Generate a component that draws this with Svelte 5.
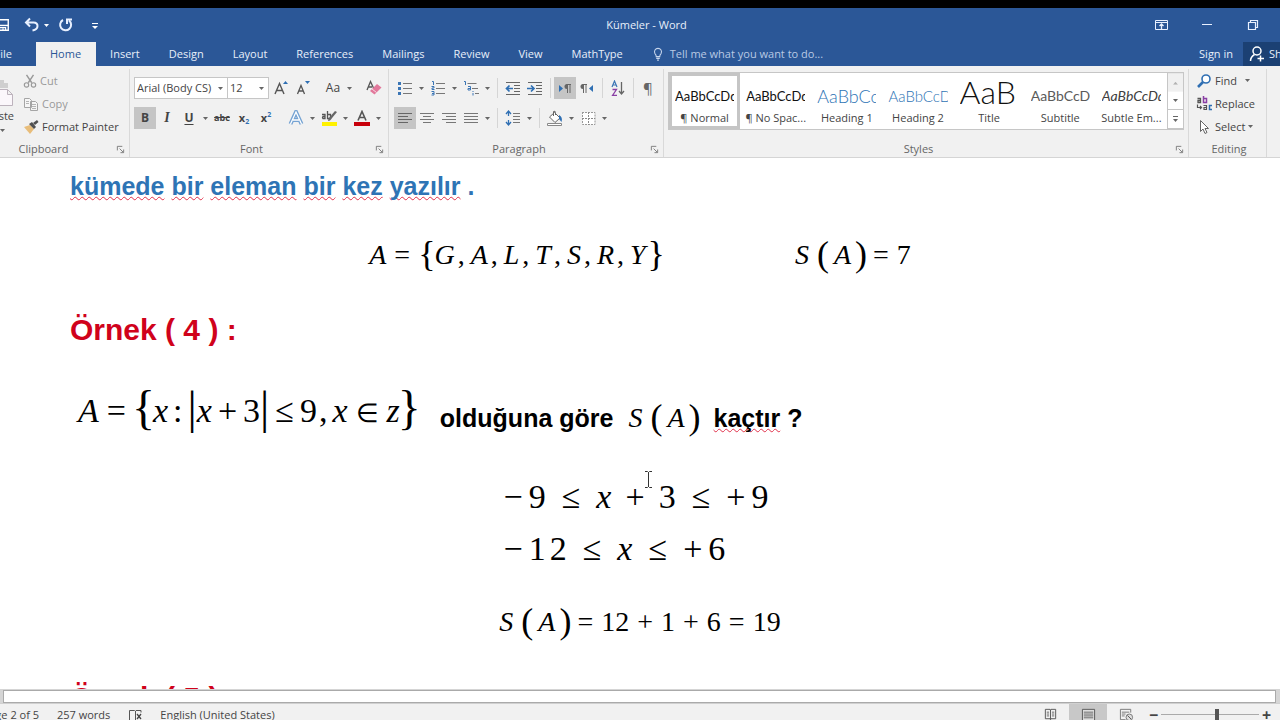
<script lang="ts">
  type Token = [kind: string, text: string];

  const tabs = ["Home", "Insert", "Design", "Layout", "References", "Mailings", "Review", "View", "MathType"];

  const styles = [
    { name: "¶ Normal", sample: "AaBbCcDd", look: "body" },
    { name: "¶ No Spac...", sample: "AaBbCcDd", look: "body" },
    { name: "Heading 1", sample: "AaBbCcDd", look: "heading1" },
    { name: "Heading 2", sample: "AaBbCcDd", look: "heading2" },
    { name: "Title", sample: "AaB", look: "display" },
    { name: "Subtitle", sample: "AaBbCcDd", look: "subtitle" },
    { name: "Subtle Em...", sample: "AaBbCcDd", look: "subtle" },
  ];

  // "|" is a separator, "v" is a small drop-down arrow
  const fontTop = ["grow", "shrink", "|", "case", "v", "|", "eraser"];
  const fontBottom = ["bold", "italic", "underline", "v", "strike", "sub", "sup", "|", "effects", "v", "highlight", "v", "color", "v"];
  const paraTop = ["bullets", "v", "numbers", "v", "multilevel", "v", "|", "outdent", "indent", "|", "ltr", "rtl", "|", "sort", "|", "marks"];
  const paraBottom = ["left", "center", "right", "justify", "v", "|", "spacing", "v", "|", "shading", "v", "borders", "v"];
  const pressed = ["bold", "ltr", "left"];

  const glyphs: Record<string, string> = {
    bold: "B",
    italic: "I",
    underline: "U",
    strike: "abc",
    case: "Aa",
    marks: "¶",
  };

  const icons: Record<string, string> = {
    bullets: `<g fill="#3a75b5"><path d="M1 2h3v3H1zM1 7h3v3H1zM1 12h3v3H1z"/></g><path d="M6 3.500h9M6 8.500h9M6 13.500h9" stroke="#777"/>`,
    numbers: `<path d="M2 1.500h1.500v3.500M1.500 6.500h2.500v1.500h-2v1.500h2.500M1.500 11.500h2.500v3.500h-2.500M2 13.500h2" fill="none" stroke="#3a75b5"/><path d="M6 3.500h9M6 8.500h9M6 13.500h9" stroke="#777"/>`,
    multilevel: `<path d="M1 1.500h1.500v3.500M5 6.500h2.500v3.500H5v-1.500h2M10 11v1M10 13v2.500" fill="none" stroke="#3a75b5"/><path d="M4.500 3.500h9M9 8.500h6M12 13.500h4" stroke="#777"/>`,
    outdent: `<path d="M1 2.500h14M9 5.500h6M9 8.500h6M9 11.500h6M1 14.500h14" stroke="#666"/><path d="M8 8.500H2M4.500 5.500l-3 3 3 3" stroke="#2f6fb3" stroke-width="1.700" fill="none"/>`,
    indent: `<path d="M1 2.500h14M9 5.500h6M9 8.500h6M9 11.500h6M1 14.500h14" stroke="#666"/><path d="M0 8.500h6M4 5.500l3 3-3 3" stroke="#2f6fb3" stroke-width="1.700" fill="none"/>`,
    ltr: `<path d="M2 5v7l4-3.500z" fill="#2f6fb3"/><path d="M10.500 13V4.500M13 13V4.500M14 4.500H9.500" stroke="#666" fill="none"/><path d="M10 4a2.500 2.500 0 0 0 0 5z" fill="#666"/>`,
    rtl: `<path d="M14 5v7l-4-3.500z" fill="#2f6fb3"/><path d="M4.500 13V4.500M7 13V4.500M8 4.500H3.500" stroke="#666" fill="none"/><path d="M4 4a2.500 2.500 0 0 0 0 5z" fill="#666"/>`,
    sort: `<path d="M2 7l2.500-6L7 7M3 5h3" stroke="#3a75b5" stroke-width="1.200" fill="none"/><path d="M2.500 9.500h4l-4 6h4.500" stroke="#8a3fa5" stroke-width="1.300" fill="none"/><path d="M11.500 2v12M9 11l2.500 3 2.500-3" stroke="#666" stroke-width="1.300" fill="none"/>`,
    left: `<path d="M1 3.500h14M1 6.500h10M1 9.500h14M1 12.500h10" stroke="#666"/>`,
    center: `<path d="M1 3.500h14M4 6.500h8M1 9.500h14M4 12.500h8" stroke="#777"/>`,
    right: `<path d="M1 3.500h14M5 6.500h10M1 9.500h14M5 12.500h10" stroke="#777"/>`,
    justify: `<path d="M1 3.500h14M1 6.500h14M1 9.500h14M1 12.500h14" stroke="#777"/>`,
    spacing: `<path d="M3.500 1v5M3.500 10v5M1 4l2.500-3L6 4M1 12l2.500 3L6 12" stroke="#2f6fb3" stroke-width="1.300" fill="none"/><path d="M8 3.500h7M8 6.500h7M8 9.500h7M8 12.500h7" stroke="#777"/>`,
    shading: `<path d="M2.500 7l5-4.500L13 8l-5 4.500zM6.500 6V1.500q2-1 2 1V5" fill="#fff" stroke="#666"/><path d="M12 5q4 2 2.500 7l-2.500-3z" fill="#2f6fb3"/><path d="M.500 13.500h14v2h-14z" fill="#fff" stroke="#888"/>`,
    borders: `<path d="M2 2.500h13v12H2.500V2" fill="#fff" stroke="#999" stroke-dasharray="2 1"/><path d="M2 8.500h13M8.500 2v13" stroke="#888" stroke-dasharray="2 1"/>`,
    grow: `<path d="M2 14L6.500 3.500 11 14M3.500 10.500h6" stroke="#555" stroke-width="1.400" fill="none"/><path d="M10 4l2.500-3L15 4z" fill="#2f6fb3"/>`,
    shrink: `<path d="M2.500 14L6 5.500 9.500 14M4 11h4" stroke="#555" stroke-width="1.300" fill="none"/><path d="M10 1l2.500 3L15 1z" fill="#2f6fb3"/>`,
    eraser: `<path d="M1 10L4.500 1.500 7.500 8M2.500 7H6" stroke="#555" stroke-width="1.300" fill="none"/><path d="M4 11l7-7 4.500 3.500-7 7z" fill="#e2789b"/><path d="M6 9l4.500 3.500" stroke="#f8dbe4"/>`,
    effects: `<path d="M2.500 14L8 2l5.500 12M5 10h6" stroke="#75a3d3" stroke-width="4" fill="none"/><path d="M2.500 14L8 2l5.500 12M5 10h6" stroke="#fff" stroke-width="1.300" fill="none"/>`,
    highlight: `<path d="M1 4.500h3v4H2q-1-1.200 0-2h2M6.500 1v7.500h3v-4h-3" stroke="#555" stroke-width="1.300" fill="none"/><path d="M16 2L9 10.500l-2 .500.500-2.500L14 1z" fill="#666"/><path d="M1 12h15v4H1z" fill="#fff200"/>`,
    color: `<path d="M4 10.500L8 1.500l4 9M5.500 7.500h5" stroke="#555" stroke-width="1.600" fill="none"/><path d="M0 12h16v4H0z" fill="#c8000b"/>`,
    cut: `<path d="M4 1l6 9M12 1L6 10" stroke="#999" stroke-width="1.600"/><circle cx="4" cy="12.500" r="2.500" fill="none" stroke="#999" stroke-width="1.300"/><circle cx="12" cy="12.500" r="2.500" fill="none" stroke="#999" stroke-width="1.300"/>`,
    copy: `<path d="M1.500 2.500h5l2 2v7h-7zM7.500 5.500h5l2 2v7h-7z" fill="#f6f6f6" stroke="#a5a5a5"/><path d="M3 5.500h3M3 7.500h3M9 8.500h4M9 10.500h4M9 12.500h4" stroke="#b5b5b5"/>`,
    painter: `<path d="M1 8l6-2 4 4-4 5z" fill="#e8bd7a"/><path d="M6 5l3-2 4 5-2 2z" fill="#505050"/><path d="M10 4l4-3 1.500 2-3.500 3z" fill="#505050"/>`,
    find: `<circle cx="10" cy="6" r="4" fill="#fff" stroke="#2f6fb3" stroke-width="1.600"/><path d="M7 9l-5 5" stroke="#2f6fb3" stroke-width="2.600"/>`,
    replace: `<path d="M1.500 2.500h3v4H2v-2h2.500" stroke="#555" stroke-width="1.300" fill="none"/><path d="M7.500 0v6.500h3v-4h-3" stroke="#8a3fa5" stroke-width="1.500" fill="none"/><path d="M7.500 9.500h3v4H8v-2h2.500M1.500 8.500v3h4M4 10l1.500 1.500L4 13" stroke="#555" stroke-width="1.200" fill="none"/><path d="M16 9.500h-2.500v4H16" stroke="#2f6fb3" stroke-width="1.500" fill="none"/>`,
    select: `<path d="M4.500 1.500v11l2.500-2.500 2 4.500 2-1-2-4h3.500z" fill="#fff" stroke="#666"/>`,
    save: `<path d="M1 2h13v12H1z" fill="none" stroke="#fff" stroke-width="1.600"/><path d="M1 8.500h13" fill="none" stroke="#fff" stroke-width="1.600"/><path d="M4 14v-3h7v3M8 12v2" stroke="#fff" fill="none" stroke-width="1.300"/>`,
    undo: `<path d="M2 5.500h7.500q4 0 4 3.500t-5 4.500M6 1.500l-4 4 4 4" fill="none" stroke="#e8f0ff" stroke-width="2"/>`,
    redo: `<path d="M5 3a5.500 5.500 0 1 0 6 .500M9 7V2.500h5" fill="none" stroke="#e8f0ff" stroke-width="2"/>`,
    more: `<path d="M5 6.500h6" stroke="#fff"/><path d="M5 9h6l-3 3z" fill="#fff"/>`,
    display: `<path d="M2.500 3.500h12v9h-12zM3 5.500h11" fill="none" stroke="#e8f0ff"/><path d="M8.500 12V7M6.500 9l2-2 2 2" stroke="#e8f0ff" fill="none" stroke-width="1.300"/>`,
    minimise: `<path d="M3 7.500h10" stroke="#e8f0ff"/>`,
    restore: `<path d="M3.500 5.500h7v7h-7zM5.500 5V3.500h7v7H11" fill="none" stroke="#e8f0ff" stroke-width="1.200"/>`,
    bulb: `<path d="M6 11q0-2-1.500-3.500a4 4 0 1 1 7 0Q10 9 10 11zM6 13h4M7 15h2" fill="none" stroke="#c8d6ec" stroke-width="1.200"/>`,
    person: `<circle cx="8" cy="5" r="4" fill="none" stroke="#fff" stroke-width="1.500"/><path d="M1.500 15q0-4 4-6.500M8.500 12.500H15M11.500 9.500v6" fill="none" stroke="#fff" stroke-width="1.500"/>`,
    proof: `<path d="M7.500 3.500h-5v10h5l1 1V4zM9 3.500h5v2M9 13.500h5" fill="none" stroke="#555"/><path d="M10 7l4 5M14 7l-4 5" stroke="#444" stroke-width="1.300"/>`,
    read: `<path d="M2.500 2.500h5l.500 1 .500-1h5v10h-5l-.500 1-.500-1h-5zM8 3v10" fill="none" stroke="#555"/><path d="M4 5.500h2.500M4 7.500h2.500M4 9.500h2.500M9.500 5.500H12M9.500 7.500H12M9.500 9.500H12" stroke="#666"/>`,
    print: `<path d="M1.500 2.500h13v12h-13z" fill="#ddd" stroke="#555"/><path d="M3 5.500h10M3 7.500h10M3 9.500h10M3 11.500h10" stroke="#666"/>`,
    web: `<path d="M12.500 6V2.500h-11v11H7" fill="none" stroke="#777"/><path d="M3 5.500h8M3 7.500h4M3 9.500h3" stroke="#777"/><circle cx="11" cy="11" r="3.500" fill="#ddd" stroke="#777"/><path d="M9 9l4 4" stroke="#555"/>`,
    paste: `<path d="M0 2h6v3h4v5H0z" fill="#cfcfcf"/><path d="M1.500 11.500h8l5 5v11h-13zM9.500 11.500v5h5" fill="#fbf7fb" stroke="#bdb3bd"/>`,
    launcher: `<path d="M1.500 6V1.500H7M4 4l4 4M8.500 5v3.500H5" fill="none" stroke="#777"/>`,
  };

  const letterSet: Token[] = [
    ["var", "A"], ["op", "="], ["lbrace", "{"],
    ["var", "G"], ["comma", ","], ["var", "A"], ["comma", ","], ["var", "L"], ["comma", ","],
    ["var", "T"], ["comma", ","], ["var", "S"], ["comma", ","], ["var", "R"], ["comma", ","],
    ["var", "Y"], ["rbrace", "}"],
  ];
  const cardinality: Token[] = [["var", "S"], ["lparen", "("], ["var", "A"], ["rparen", ")"]];
  const countSeven: Token[] = [...cardinality, ["op", "="], ["num", "7"]];
  const absoluteSet: Token[] = [
    ["var", "A"], ["op", "="], ["lbrace", "{"], ["var", "x"], ["colon", ":"],
    ["bar", "|"], ["var", "x"], ["tight", "+"], ["num", "3"], ["bar", "|"],
    ["tight", "≤"], ["num", "9"], ["comma", ","], ["var", "x"], ["member", "∈"], ["var", "z"], ["rbrace", "}"],
  ];
  const firstStep: Token[] = [
    ["sign", "−"], ["num", "9"], ["rel", "≤"], ["var", "x"], ["plus", "+"], ["num", "3"],
    ["rel", "≤"], ["sign", "+"], ["num", "9"],
  ];
  const secondStep: Token[] = [
    ["sign", "−"], ["num", "1"], ["digit", "2"], ["rel", "≤"], ["var", "x"],
    ["rel", "≤"], ["sign", "+"], ["num", "6"],
  ];
  const result: Token[] = [
    ...cardinality, ["op", "="], ["num", "12"], ["op", "+"], ["num", "1"], ["op", "+"],
    ["num", "6"], ["op", "="], ["num", "19"],
  ];

  let zoom = $state(107);
  let activeTab = $state("Home");
</script>

{#snippet icon(name: string, size = 16)}
  <svg width={size} height={size} viewBox="0 0 16 16" aria-hidden="true">{@html icons[name]}</svg>
{/snippet}

{#snippet caret()}
  <svg class="caret" width="5" height="3" viewBox="0 0 5 3" aria-hidden="true"><path d="M0 0h5L2.500 3z" fill="currentColor" /></svg>
{/snippet}

{#snippet toolbar(items: string[])}
  {#each items as item}
    {#if item === "|"}
      <span class="sep"></span>
    {:else if item === "v"}
      <button class="drop" aria-label="More options">{@render caret()}</button>
    {:else}
      <button class="tool {item}" class:pressed={pressed.includes(item)} aria-label={item}>
        {#if item === "sub"}
          x<sub>2</sub>
        {:else if item === "sup"}
          x<sup>2</sup>
        {:else if glyphs[item]}
          {glyphs[item]}
        {:else}
          {@render icon(item)}
        {/if}
      </button>
    {/if}
  {/each}
{/snippet}

{#snippet caption(text: string, launcher = true)}
  <div class="caption" class:launchable={launcher}>
    <span>{text}</span>
    {#if launcher}
      <button class="launcher" aria-label="{text} settings">
        <svg width="9" height="9" viewBox="0 0 10 10">{@html icons.launcher}</svg>
      </button>
    {/if}
  </div>
{/snippet}

{#snippet math(tokens: Token[], large = false)}
  <span class="math" class:large>{#each tokens as [kind, text]}<span class={kind}>{text}</span>{/each}</span>
{/snippet}

<div class="word">
  <header>
    <div class="titlebar">
      <div class="quick">
        <button aria-label="Save">{@render icon("save", 14)}</button>
        <button aria-label="Undo">{@render icon("undo")}{@render caret()}</button>
        <button aria-label="Repeat">{@render icon("redo")}</button>
        <button class="customize" aria-label="Customize">{@render icon("more")}</button>
      </div>
      <span class="title">Kümeler - Word</span>
      <div class="window-buttons">
        <button aria-label="Ribbon display options">{@render icon("display")}</button>
        <button aria-label="Minimize">{@render icon("minimise")}</button>
        <button aria-label="Restore">{@render icon("restore")}</button>
      </div>
    </div>
    <nav>
      <button class="file">File</button>
      {#each tabs as tab}
        <button class="tab" class:active={tab === activeTab} onclick={() => (activeTab = tab)}>{tab}</button>
      {/each}
      <button class="tell">{@render icon("bulb", 14)}Tell me what you want to do...</button>
      <button class="signin">Sign in</button>
      <button class="share">{@render icon("person")}<span>Share</span></button>
    </nav>
  </header>

  <section class="ribbon">
    <div class="group clipboard">
      <div class="body">
        <button class="paste">
          <svg width="16" height="30" viewBox="0 0 16 30" aria-hidden="true">{@html icons.paste}</svg>
          <span>Paste</span>
          {@render caret()}
        </button>
        <div class="stack">
          <button disabled>{@render icon("cut", 14)}Cut</button>
          <button disabled>{@render icon("copy")}Copy</button>
          <button>{@render icon("painter")}Format Painter</button>
        </div>
      </div>
      {@render caption("Clipboard")}
    </div>

    <div class="group font">
      <div class="rows">
        <div class="row">
          <label class="combo name">
            <select aria-label="Font"><option>Arial (Body CS)</option></select>
            {@render caret()}
          </label>
          <label class="combo size">
            <select aria-label="Font size"><option>12</option></select>
            {@render caret()}
          </label>
          {@render toolbar(fontTop)}
        </div>
        <div class="row">{@render toolbar(fontBottom)}</div>
      </div>
      {@render caption("Font")}
    </div>

    <div class="group paragraph">
      <div class="rows">
        <div class="row">{@render toolbar(paraTop)}</div>
        <div class="row">{@render toolbar(paraBottom)}</div>
      </div>
      {@render caption("Paragraph")}
    </div>

    <div class="group styles">
      <div class="gallery">
        {#each styles as style, i}
          <button class="style" class:chosen={i === 0}>
            <span class="sample {style.look}">{style.sample}</span>
            <span class="label">{style.name}</span>
          </button>
        {/each}
        <div class="scroller">
          <button class="up" aria-label="Previous styles">{@render caret()}</button>
          <button aria-label="Next styles">{@render caret()}</button>
          <button class="expand" aria-label="All styles">{@render caret()}</button>
        </div>
      </div>
      {@render caption("Styles")}
    </div>

    <div class="group editing">
      <div class="stack">
        <button>{@render icon("find")}Find <span class="push">{@render caret()}</span></button>
        <button>{@render icon("replace")}Replace</button>
        <button>{@render icon("select")}Select {@render caret()}</button>
      </div>
      {@render caption("Editing", false)}
    </div>
  </section>

  <main>
    <p class="note">
      {#each ["kümede", "bir", "eleman", "bir", "kez", "yazılır"] as word}<u>{word}</u>{" "}{/each}.
    </p>
    <div class="line pair">
      {@render math(letterSet)}
      {@render math(countSeven)}
    </div>
    <h2>Örnek ( 4 ) :</h2>
    <div class="question">
      {@render math(absoluteSet, true)}
      <strong>olduğuna göre</strong>
      {@render math(cardinality)}
      <strong><u>kaçtır</u> ?</strong>
    </div>
    <div class="steps">
      {@render math(firstStep, true)}
      {@render math(secondStep, true)}
      <svg class="ibeam" width="7" height="17" viewBox="0 0 7 17"><path d="M0 .500h2.500l1 1 1-1H7M3.500 1v15M0 16.500h2.500l1-1 1 1H7" fill="none" stroke="#333" /></svg>
    </div>
    <div class="line result">{@render math(result)}</div>
    <h2>Örnek ( 5 ) :</h2>
  </main>

  <div class="hscroll"><div></div></div>

  <footer>
    <span class="pages"><span>Page 2 of 5</span></span>
    <span class="words">257 words</span>
    {@render icon("proof")}
    <span class="language">English (United States)</span>
    <div class="views">
      <button aria-label="Read mode">{@render icon("read", 15)}</button>
      <button class="current" aria-label="Print layout">{@render icon("print", 15)}</button>
      <button aria-label="Web layout">{@render icon("web", 15)}</button>
    </div>
    <button class="step" aria-label="Zoom out">−</button>
    <input type="range" min="10" max="180" aria-label="Zoom" bind:value={zoom} />
    <button class="step" aria-label="Zoom in">+</button>
  </footer>
</div>

<style>
  :global(body) {
    margin: 0;
    overflow: hidden;
  }

  .word {
    display: flex;
    flex-direction: column;
    height: 100vh;
    overflow: hidden;
    box-sizing: border-box;
    border-top: 8px solid #000;
    background: #fff;
    color: #444;
    font-family: "Open Sans", "Noto Sans", sans-serif;
    font-size: 11px;
    line-height: 16px;
  }

  button {
    display: flex;
    align-items: center;
    justify-content: center;
    flex: none;
    padding: 0;
    border: 0;
    background: none;
    color: inherit;
    font: inherit;
    white-space: nowrap;
  }

  svg {
    flex: none;
  }

  header {
    flex: none;
    background: #2b5797;
    color: #e8effa;
  }

  .titlebar {
    display: grid;
    grid-template-columns: 1fr auto 1fr;
    align-items: center;
    height: 34px;
  }

  .quick {
    display: flex;
    align-items: center;
    gap: 9px;
    margin-left: -4px;
    height: 28px;
  }

  .quick button {
    gap: 4px;
  }

  .quick button:first-child {
    margin-right: 5px;
  }

  .quick .customize {
    margin-left: 4px;
  }

  .title {
    padding-left: 13px;
  }

  .window-buttons {
    display: flex;
    justify-content: flex-end;
    gap: 30px;
    padding-right: 19px;
  }

  nav {
    display: flex;
    height: 24px;
  }

  .file {
    width: 12px;
    margin-right: 24px;
    justify-content: flex-end;
    overflow: hidden;
  }

  .tab {
    padding: 0 15px 0 14px;
  }

  .tab.active {
    background: #f1f1f1;
    color: #2b5797;
  }

  .tell {
    gap: 5px;
    padding-left: 13px;
    color: #b9c9e4;
  }

  .signin {
    margin-left: auto;
    margin-right: 10px;
  }

  .share {
    justify-content: flex-start;
    width: 37px;
    padding-left: 6px;
    box-sizing: border-box;
    gap: 4px;
    overflow: hidden;
    background: #1b4073;
  }

  .ribbon {
    display: flex;
    flex: none;
    height: 92px;
    border-bottom: 1px solid #d5d5d5;
    box-sizing: border-box;
    background: #f1f1f1;
  }

  .group {
    display: flex;
    flex-direction: column;
    box-sizing: border-box;
    padding: 3px 4px 0;
    border-right: 1px solid #d9d9d9;
    margin-top: 3px;
  }

  .caption {
    display: flex;
    justify-content: center;
    align-items: center;
    position: relative;
    margin-top: auto;
    height: 16px;
    color: #666;
  }

  .launchable {
    padding-right: 15px;
  }

  .launcher {
    position: absolute;
    right: 0;
    top: 4px;
  }

  .clipboard {
    width: 130px;
    padding-left: 0;
  }

  .clipboard .caption {
    padding-right: 38px;
  }

  .body {
    display: flex;
    gap: 9px;
  }

  .paste {
    flex-direction: column;
    align-items: flex-end;
    width: 14px;
    overflow: hidden;
  }

  .paste .caret {
    align-self: flex-start;
    margin-top: 5px;
  }

  .stack {
    display: flex;
    flex-direction: column;
    align-items: flex-start;
  }

  .stack button {
    height: 23px;
    gap: 3px;
  }

  .clipboard .stack,
  .editing .stack {
    margin-top: -3px;
  }

  .stack button:disabled {
    color: #999;
  }

  .font {
    width: 259px;
  }

  .paragraph {
    width: 275px;
    padding-left: 5px;
  }

  .rows {
    display: flex;
    flex-direction: column;
    gap: 8px;
    padding-top: 5px;
  }

  .row {
    display: flex;
    align-items: center;
    height: 22px;
  }

  .tool {
    width: 22px;
    height: 22px;
  }

  .pressed {
    background: #c5c5c5;
  }

  .drop {
    width: 11px;
    height: 22px;
  }

  .caret {
    color: #666;
  }

  .quick .caret {
    color: #fff;
  }

  .sep {
    width: 1px;
    height: 20px;
    margin: 0 4px;
    background: #d5d5d5;
  }

  .bold,
  .underline,
  .strike,
  .sub,
  .sup {
    font-weight: 700;
  }

  .bold,
  .underline {
    font-size: 12px;
  }

  .underline {
    text-decoration: underline;
    text-underline-offset: 2px;
  }

  .italic {
    font-family: "Liberation Serif", serif;
    font-size: 14px;
    font-style: italic;
    font-weight: 700;
  }

  .strike {
    font-size: 9px;
    text-decoration: line-through;
  }

  .case {
    font-size: 12px;
  }

  .marks {
    font-size: 15px;
    color: #666;
  }

  sub,
  sup {
    color: #2f6fb3;
    font-size: 7px;
    line-height: 7px;
  }

  sub {
    align-self: flex-end;
    margin-bottom: 4px;
  }

  sup {
    align-self: flex-start;
    margin-top: 4px;
  }

  .combo {
    display: flex;
    flex: none;
    align-items: center;
    box-sizing: border-box;
    height: 22px;
    padding-right: 4px;
    border: 1px solid #c6c6c6;
    background: #fff;
  }

  .combo select {
    flex: 1;
    min-width: 0;
    padding: 0 0 0 2px;
    border: 0;
    appearance: none;
    background: none;
    color: #444;
    font: inherit;
    text-overflow: clip;
  }

  .name {
    width: 94px;
  }

  .size {
    width: 42px;
    margin: 0 1px 0 -1px;
  }

  .styles {
    flex: 1;
    min-width: 0;
  }

  .gallery {
    display: flex;
    height: 58px;
    box-sizing: border-box;
    border: 1px solid #c6c6c6;
    background: #fff;
    overflow: hidden;
  }

  .style {
    flex: 1 1 0;
    min-width: 0;
    flex-direction: column;
    justify-content: flex-end;
    box-sizing: border-box;
    padding: 0 3px;
    border: 3px solid transparent;
    overflow: hidden;
  }

  .chosen {
    border-color: #c5c5c5;
  }

  .style .label {
    line-height: 16px;
  }

  .sample {
    align-self: stretch;
    height: 28px;
    overflow: hidden;
    color: #111;
    font-family: Lato, sans-serif;
    font-size: 13px;
    line-height: 28px;
    text-align: left;
  }

  .heading1 {
    color: #2e74b5;
    font-size: 18px;
    font-weight: 300;
  }

  .heading2 {
    color: #2e74b5;
    font-size: 15px;
    font-weight: 300;
  }

  .display {
    font-size: 32px;
    font-weight: 300;
    line-height: 20px;
  }

  .subtitle {
    color: #5a5a5a;
    font-size: 14px;
  }

  .subtle {
    color: #404040;
    font-style: italic;
    font-size: 14px;
  }

  .scroller {
    display: flex;
    flex-direction: column;
    width: 15px;
    border-left: 1px solid #c6c6c6;
  }

  .scroller button {
    flex: 1;
    border-bottom: 1px solid #c6c6c6;
  }

  .scroller .up {
    background: #e3e3e3;
    transform: scaleY(-1);
    opacity: 0.5;
  }

  .expand :global(svg) {
    border-top: 1px solid #666;
    padding-top: 2px;
  }

  .editing {
    width: 78px;
    margin-right: 13px;
    padding-left: 7px;
  }

  .push {
    display: flex;
    margin-left: 5px;
  }

  main {
    flex: 1;
    min-height: 0;
    overflow: hidden;
    padding: 0 70px;
    color: #000;
    font-family: "Liberation Sans", sans-serif;
    font-size: 25px;
    line-height: 30px;
  }

  .note {
    margin: 13px 0 0;
    color: #2e74b5;
    font-weight: 700;
  }

  u {
    text-decoration: underline wavy #e0304a 1px;
    text-underline-offset: 1px;
    text-decoration-skip-ink: none;
  }

  h2 {
    margin: 0;
    color: #d0021b;
    font-size: 30px;
    line-height: 36px;
  }

  .line {
    display: flex;
    justify-content: center;
    align-items: baseline;
  }

  .math {
    display: block;
    font-family: "Liberation Serif", serif;
    font-size: 28px;
    line-height: 50px;
    white-space: nowrap;
  }

  .large {
    font-size: 34px;
  }

  .var {
    font-style: italic;
  }

  .op {
    margin: 0 8px;
  }

  .tight {
    margin: 0 6px;
  }

  .colon {
    margin: 0 5px;
  }

  .comma {
    margin: 0 6px 0 3px;
  }

  .large .comma {
    margin: 0 5px 0 2px;
  }

  .member {
    margin: 0 8px;
    font-size: 26px;
    line-height: 0;
  }

  .plus {
    margin: 0 14px;
  }

  .rel {
    margin: 0 16px;
  }

  .sign {
    margin-right: 6px;
  }

  .digit {
    margin-left: 4px;
  }

  .lbrace,
  .rbrace,
  .lparen,
  .rparen {
    font-size: 36px;
    line-height: 0;
    vertical-align: -2px;
  }

  .lbrace {
    margin-right: -1px;
  }

  .rbrace {
    margin-left: 2px;
  }

  .lparen {
    margin: 0 5px 0 8px;
  }

  .rparen {
    margin: 0 -2px 0 4px;
  }

  .large .lbrace,
  .large .rbrace {
    margin: 0 -2px;
    font-size: 48px;
  }

  .bar {
    font-size: 46px;
    line-height: 0;
    vertical-align: -1px;
  }

  .pair {
    gap: 130px;
    margin-top: 29px;
  }

  .pair + h2 {
    margin-top: 32px;
  }

  .question {
    display: flex;
    align-items: flex-start;
    gap: 15px;
    margin: 38px 0 0 8px;
  }

  /* the sentence sits lower than the tall formula that opens it */
  .question strong,
  .question .math:not(.large) {
    line-height: 64px;
    white-space: nowrap;
  }

  .question .large {
    margin-right: 6px;
  }

  .steps {
    position: relative;
    width: fit-content;
    margin: 21px auto 0;
    padding-right: 8px;
  }

  .steps .math {
    line-height: 52px;
  }

  .ibeam {
    position: absolute;
    left: 141px;
    top: 0;
  }

  .result {
    margin: 22px 0 33px;
  }

  .hscroll {
    flex: none;
    padding: 1px 4px 0 3px;
    background: #d5d5d5;
  }

  .hscroll div {
    height: 13px;
    border: 1px solid #aaa;
    box-sizing: border-box;
    background: #fff;
  }

  /* the bar runs on below the edge of the window */
  footer {
    display: flex;
    flex: none;
    align-items: center;
    height: 22px;
    margin-bottom: -5px;
    padding-right: 6px;
    border-top: 1px solid #d0d0d0;
    box-sizing: border-box;
    overflow: hidden;
    background: #f1f1f1;
  }

  .pages {
    display: flex;
    justify-content: flex-end;
    width: 39px;
    margin-right: 18px;
    overflow: hidden;
    white-space: nowrap;
  }

  .words {
    margin-right: 17px;
  }

  .language {
    margin-left: 17px;
  }

  .views {
    display: flex;
    margin-left: auto;
    margin-right: 1px;
  }

  .views button {
    width: 38px;
    height: 21px;
  }

  .current {
    background: #c8c8c8;
  }

  .step {
    width: 15px;
    font-size: 16px;
    font-weight: 700;
  }

  input[type="range"] {
    width: 98px;
    height: 16px;
    margin: 0;
    appearance: none;
    background: linear-gradient(#aaa, #aaa) center / 100% 1px no-repeat;
  }

  input[type="range"]::-webkit-slider-thumb {
    appearance: none;
    width: 4px;
    height: 12px;
    background: #555;
  }
</style>
